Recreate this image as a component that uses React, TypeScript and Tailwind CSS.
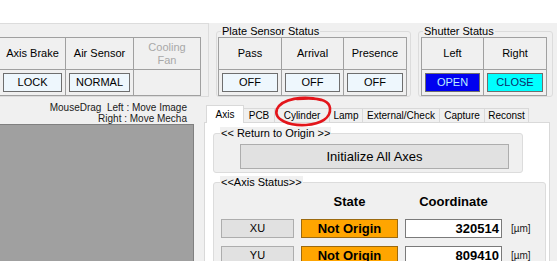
import React from 'react';

type Col = {
  head: React.ReactNode;
  value?: string;
  w: string;
  box?: string;
  muted?: boolean;
};

function StatusTable({ cols, className = '' }: { cols: Col[]; className?: string }) {
  return (
    <div className={`flex w-fit border-l border-t border-[#a0a0a0] ${className}`}>
      {cols.map((c, i) => (
        <div key={i} className={`flex flex-col ${c.w}`}>
          <div
            className={`h-[32px] flex items-center justify-center text-center leading-[13px] border-r border-b border-[#a0a0a0] ${
              c.muted ? 'text-[#a8a8a8]' : ''
            }`}
          >
            {c.head}
          </div>
          <div className="h-[26px] p-[3px] border-r border-b border-[#a0a0a0]">
            {c.value && (
              <div
                className={`h-[19px] flex items-center justify-center border border-[#6e6e6e] ${
                  c.box ?? 'bg-[#eef7fd] text-black'
                }`}
              >
                {c.value}
              </div>
            )}
          </div>
        </div>
      ))}
    </div>
  );
}

function GroupBox({
  label,
  labelMl = 'ml-[4px]',
  className = '',
  children,
}: {
  label: string;
  labelMl?: string;
  className?: string;
  children?: React.ReactNode;
}) {
  return (
    <div className={`border border-[#dcdcdc] rounded-[3px] ${className}`}>
      <div className={`-mt-[7px] ${labelMl} w-fit px-px h-[12px] leading-[12px] bg-[#f0f0f0] whitespace-nowrap`}>
        {label}
      </div>
      {children}
    </div>
  );
}

const tabs = [
  { name: 'PCB', w: 'w-[31px]' },
  { name: 'Cylinder', w: 'w-[55px]' },
  { name: 'Lamp', w: 'w-[33px]' },
  { name: 'External/Check', w: 'w-[77px]' },
  { name: 'Capture', w: 'w-[45px]' },
  { name: 'Reconst', w: 'w-[44px]' },
];

const axes = [
  { name: 'XU', coord: '320514' },
  { name: 'YU', coord: '809410' },
];

export default function App() {
  return (
    <div className="relative w-[557px] h-[261px] overflow-hidden bg-white text-[11px] text-black font-['Liberation_Sans',Arial,sans-serif]">
      <div className="h-[23px] bg-white" />

      {/* Status groups */}
      <div className="flex h-[74px] bg-[#f0f0f0]">
        <div className="w-[209px] h-[74px] shrink-0 border-t border-r border-b border-[#dcdcdc] pt-[13px]">
          <StatusTable
            className="-ml-px"
            cols={[
              { head: 'Axis Brake', value: 'LOCK', w: 'w-[66px]' },
              { head: 'Air Sensor', value: 'NORMAL', w: 'w-[68px]' },
              {
                head: (
                  <span>
                    Cooling
                    <br />
                    Fan
                  </span>
                ),
                w: 'w-[67px]',
                muted: true,
              },
            ]}
          />
        </div>

        <GroupBox label="Plate Sensor Status" className="ml-[7px] mt-[8px] h-[66px] w-[195px] shrink-0">
          <StatusTable
            className="ml-[1px]"
            cols={[
              { head: 'Pass', value: 'OFF', w: 'w-[63px]' },
              { head: 'Arrival', value: 'OFF', w: 'w-[62px]' },
              { head: 'Presence', value: 'OFF', w: 'w-[63px]' },
            ]}
          />
        </GroupBox>

        <GroupBox label="Shutter Status" className="ml-[7px] mt-[8px] h-[66px] w-[135px] shrink-0">
          <StatusTable
            className="ml-[2px]"
            cols={[
              { head: 'Left', value: 'OPEN', w: 'w-[62px]', box: 'bg-[#0000f0] text-[#bfeeff]' },
              { head: 'Right', value: 'CLOSE', w: 'w-[63px]', box: 'bg-[#00ffff] text-[#0b2d6b]' },
            ]}
          />
        </GroupBox>
      </div>

      <div className="flex h-[164px] bg-[#f0f0f0]">
        {/* Image view */}
        <div className="w-[194px] shrink-0 flex flex-col">
          <div className="h-[27px] pt-[5px] pr-[7px] text-right text-[10px] leading-[11px] text-[#1a1a1a] whitespace-pre">
            <div>MouseDrag  Left : Move Image</div>
            <div>Right : Move Mecha</div>
          </div>
          <div className="flex-1 bg-[#a0a0a0] border-t border-r border-[#808080]" />
        </div>

        {/* Tab control */}
        <div className="ml-[10px] w-[346px] shrink-0 flex flex-col pt-[8px]">
          <div className="relative z-10 flex items-end h-[17px] pl-[2px] text-[10px]">
            <div className="-mb-px h-[18px] w-[38px] flex items-center justify-center bg-white border-l border-t border-r border-[#d9d9d9]">
              Axis
            </div>
            {tabs.map((t) => (
              <div
                key={t.name}
                className={`h-[14px] ${t.w} flex items-center justify-center bg-[#f0f0f0] border-t border-r border-[#d9d9d9] whitespace-nowrap`}
              >
                {t.name}
              </div>
            ))}
          </div>

          <div className="flex-1 bg-white border border-[#d9d9d9]">
            <GroupBox
              label="<< Return to Origin >>"
              labelMl="ml-[6px]"
              className="mt-[10px] ml-[8px] w-[310px] h-[40px] bg-[#f0f0f0]"
            >
              <button className="mt-[5px] ml-[26px] w-[269px] h-[25px] bg-[#e1e1e1] border border-[#adadad] text-[13px]">
                Initialize All Axes
              </button>
            </GroupBox>

            <GroupBox
              label="<<Axis Status>>"
              labelMl="ml-[6px]"
              className="mt-[9px] ml-[8px] w-[333px] h-[110px] bg-[#f0f0f0]"
            >
              <div className="mt-[6px] ml-[7px] flex h-[16px] leading-[16px] text-[13px] font-bold">
                <div className="w-[73px]" />
                <div className="ml-[7px] w-[97px] text-center">State</div>
                <div className="ml-[7px] w-[97px] text-center">Coordinate</div>
              </div>
              <div className="mt-[9px] ml-[7px] flex flex-col gap-[8px]">
                {axes.map((a) => (
                  <div key={a.name} className="flex items-center h-[19px]">
                    <div className="w-[73px] h-[19px] flex items-center justify-center bg-[#e1e1e1] border border-[#adadad]">
                      {a.name}
                    </div>
                    <div className="ml-[7px] w-[97px] h-[19px] flex items-center justify-center bg-[#ffa500] border border-[#9c6a10] text-[13px] font-bold">
                      Not Origin
                    </div>
                    <div className="ml-[7px] w-[97px] h-[19px] flex items-center justify-end pr-[2px] bg-white border border-[#7a7a7a] text-[13px] font-bold">
                      {a.coord}
                    </div>
                    <div className="ml-[9px] text-[10px] text-[#1a1a1a]">[µm]</div>
                  </div>
                ))}
              </div>
            </GroupBox>
          </div>
        </div>

        <div className="flex-1" />
      </div>

      {/* hand-drawn annotation */}
      <svg className="pointer-events-none absolute inset-0 z-20" width="557" height="261" viewBox="0 0 557 261">
        <path
          d="M321 100 C303 95 282 99 277 109 C273 120 290 126 306 125 C321 124 331 118 330 108 C329 100 318 97 297 99"
          fill="none"
          stroke="#e3151b"
          strokeWidth="2.6"
          strokeLinecap="round"
        />
      </svg>
    </div>
  );
}
